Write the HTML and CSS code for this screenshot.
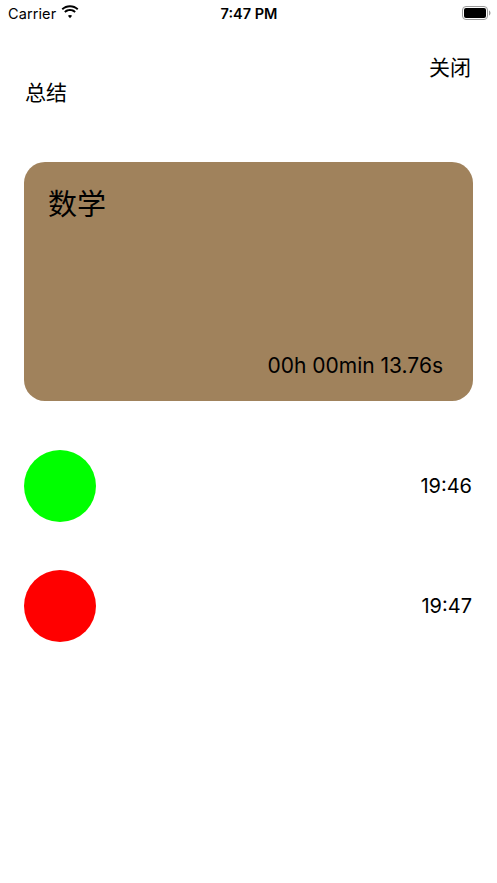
FILE: index.html
```html
<!DOCTYPE html>
<html lang="zh-CN">
<head>
<meta charset="utf-8">
<title>总结</title>
<link rel="stylesheet" href="styles.css">
</head>
<body>
<div class="screen">
  <div class="status-bar">
    <div class="status-left">
      <span class="carrier">Carrier</span>
      <svg class="wifi" width="18" height="14" viewBox="0 0 18 14">
        <path d="M9 2.2c2.7 0 5.2 1 7.1 2.8l1.3-1.4C15.1 1.4 12.2 0.2 9 0.2S2.9 1.4 0.6 3.6l1.3 1.4C3.8 3.2 6.3 2.2 9 2.2z" fill="#000"/>
        <path d="M9 6.1c1.7 0 3.2 0.6 4.4 1.7l1.4-1.4C13.2 4.9 11.2 4.1 9 4.1S4.8 4.9 3.2 6.4l1.4 1.4C5.8 6.7 7.3 6.1 9 6.1z" fill="#000"/>
        <path d="M9 9.9c0.8 0 1.5 0.3 2.1 0.8L9 13.2 6.9 10.7C7.5 10.2 8.2 9.9 9 9.9z" fill="#000"/>
      </svg>
    </div>
    <div class="status-time">7:47 PM</div>
    <div class="status-right">
      <svg class="battery" width="30" height="14" viewBox="0 0 30 14">
        <rect x="0.5" y="0.5" width="25" height="13" rx="3.5" fill="none" stroke="#9a9a9a" stroke-width="1"/>
        <rect x="2" y="2" width="22" height="10" rx="2" fill="#000"/>
        <path d="M27 4.5v5c0.9-0.3 1.5-1.3 1.5-2.5s-0.6-2.2-1.5-2.5z" fill="#9a9a9a"/>
      </svg>
    </div>
  </div>

  <div class="nav">
    <div class="close">关闭</div>
    <div class="title">总结</div>
  </div>

  <div class="card">
    <div class="subject">数学</div>
    <div class="duration">00h 00min 13.76s</div>
  </div>

  <div class="records">
    <div class="record">
      <div class="dot dot-start"></div>
      <div class="record-time">19:46</div>
    </div>
    <div class="record">
      <div class="dot dot-end"></div>
      <div class="record-time">19:47</div>
    </div>
  </div>
</div>
</body>
</html>
```

FILE: styles.css
```css
html, body {
  margin: 0;
  padding: 0;
  background: #ffffff;
}

body {
  font-family: Inter, "Noto Sans CJK SC", sans-serif;
  color: #000;
}

.screen {
  width: 497px;
  min-height: 883px;
  display: flex;
  flex-direction: column;
}

.status-bar {
  height: 26px;
  display: grid;
  grid-template-columns: 1fr auto 1fr;
  align-items: center;
  padding: 0 7px 0 8px;
}

.status-left {
  display: flex;
  align-items: center;
  gap: 5px;
}

.carrier {
  font-size: 14.5px;
  letter-spacing: 0.1px;
}

.wifi {
  display: block;
  margin-top: -2px;
}

.status-time {
  font-size: 14.5px;
  font-weight: 600;
  text-align: center;
}

.status-right {
  display: flex;
  justify-content: flex-end;
}

.battery {
  display: block;
  margin-right: -2px;
}

.nav {
  display: flex;
  flex-direction: column;
  padding: 28px 26px 0 25px;
  font-family: "Noto Sans CJK SC", sans-serif;
  font-size: 21px;
  line-height: 25px;
}

.close {
  align-self: flex-end;
}

.title {
  align-self: flex-start;
}

.card {
  margin: 58px 24px 0 24px;
  height: 239px;
  border-radius: 21px;
  background: #a0825c;
  box-sizing: border-box;
  padding: 23px 30px 23px 24px;
  display: flex;
  flex-direction: column;
  justify-content: space-between;
}

.subject {
  font-family: "Noto Sans CJK SC", sans-serif;
  font-size: 29px;
  line-height: 34px;
}

.duration {
  align-self: flex-end;
  font-size: 21px;
  line-height: 24px;
}

.records {
  display: flex;
  flex-direction: column;
  gap: 48px;
  margin-top: 49px;
  padding: 0 25px 0 24px;
}

.record {
  display: flex;
  align-items: center;
  justify-content: space-between;
  height: 72px;
}

.dot {
  width: 72px;
  height: 72px;
  border-radius: 50%;
}

.dot-start {
  background: #00ff00;
}

.dot-end {
  background: #ff0000;
}

.record-time {
  font-size: 20px;
  line-height: 24px;
}
```
